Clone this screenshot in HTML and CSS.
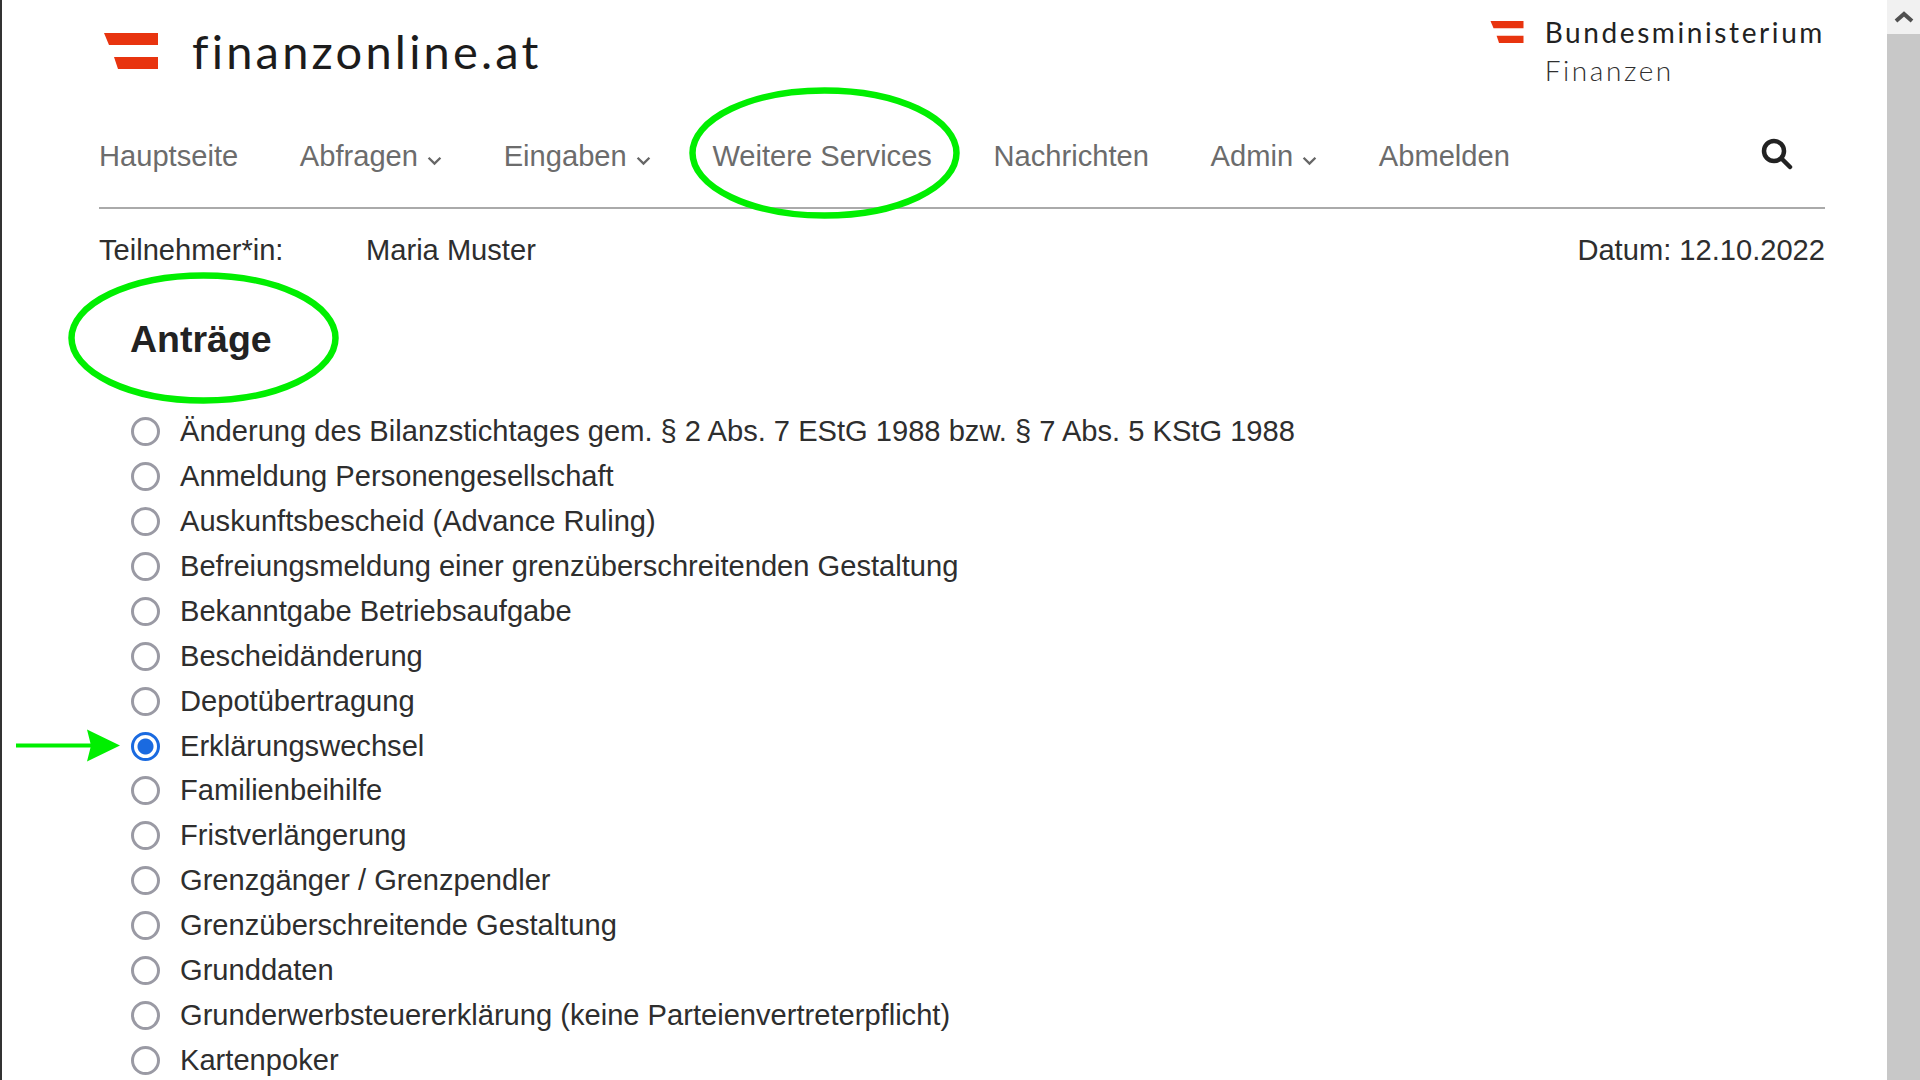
FILE: index.html
```html
<!DOCTYPE html>
<html lang="de">

<head>
  <meta charset="UTF-8" />
  <meta name="viewport" content="width=device-width, initial-scale=1" />
  <title>FinanzOnline - Anträge</title>
  <link rel="stylesheet" href="styles.css">
</head>

<body>
  <div class="page">
    <main class="content">
      <header class="top">
        <div class="logo">
          <svg class="flag" viewBox="0 0 54 36" aria-hidden="true">
            <polygon points="0,0 54,0 54,12 5,12" />
            <polygon points="10,24 54,24 54,36 14,36" />
          </svg>
          <span class="logo-text">finanzonline.at</span>
        </div>
        <div class="ministry">
          <svg class="flag-small" viewBox="0 0 54 36" aria-hidden="true">
            <polygon points="0,0 54,0 54,12 5,12" />
            <polygon points="10,24 54,24 54,36 14,36" />
          </svg>
          <div class="ministry-text">
            <div class="ministry-name">Bundesministerium</div>
            <div class="ministry-sub">Finanzen</div>
          </div>
        </div>
      </header>

      <nav class="nav">
        <a href="#">Hauptseite</a>
        <a href="#">Abfragen<svg class="chev" viewBox="0 0 14 9"><path d="M1.5 1.5 7 7l5.5-5.5" /></svg></a>
        <a href="#">Eingaben<svg class="chev" viewBox="0 0 14 9"><path d="M1.5 1.5 7 7l5.5-5.5" /></svg></a>
        <a href="#">Weitere Services</a>
        <a href="#">Nachrichten</a>
        <a href="#">Admin<svg class="chev" viewBox="0 0 14 9"><path d="M1.5 1.5 7 7l5.5-5.5" /></svg></a>
        <a href="#">Abmelden</a>
        <svg class="search" viewBox="0 0 32 32" aria-label="Suche">
          <circle cx="13" cy="13" r="10" />
          <path d="M20.5 20.5 29 29" />
        </svg>
      </nav>

      <div class="meta">
        <span class="meta-label">Teilnehmer*in:</span>
        <span class="meta-name">Maria Muster</span>
        <span class="meta-date">Datum: 12.10.2022</span>
      </div>

      <h1>Anträge</h1>

      <form class="list">
        <label><input type="radio" name="antrag" />Änderung des Bilanzstichtages gem. § 2 Abs. 7 EStG 1988 bzw. § 7 Abs. 5 KStG 1988</label>
        <label><input type="radio" name="antrag" />Anmeldung Personengesellschaft</label>
        <label><input type="radio" name="antrag" />Auskunftsbescheid (Advance Ruling)</label>
        <label><input type="radio" name="antrag" />Befreiungsmeldung einer grenzüberschreitenden Gestaltung</label>
        <label><input type="radio" name="antrag" />Bekanntgabe Betriebsaufgabe</label>
        <label><input type="radio" name="antrag" />Bescheidänderung</label>
        <label><input type="radio" name="antrag" />Depotübertragung</label>
        <label><input type="radio" name="antrag" checked />Erklärungswechsel</label>
        <label><input type="radio" name="antrag" />Familienbeihilfe</label>
        <label><input type="radio" name="antrag" />Fristverlängerung</label>
        <label><input type="radio" name="antrag" />Grenzgänger / Grenzpendler</label>
        <label><input type="radio" name="antrag" />Grenzüberschreitende Gestaltung</label>
        <label><input type="radio" name="antrag" />Grunddaten</label>
        <label><input type="radio" name="antrag" />Grunderwerbsteuererklärung (keine Parteienvertreterpflicht)</label>
        <label><input type="radio" name="antrag" />Kartenpoker</label>
      </form>
    </main>

    <div class="scrollbar">
      <div class="scroll-up">
        <svg viewBox="0 0 20 12"><path d="M2 10 10 3l8 7" /></svg>
      </div>
    </div>

    <!-- green markings lying over the page -->
    <svg class="marks" viewBox="0 0 1920 1080" aria-hidden="true">
      <ellipse cx="824.5" cy="153" rx="132" ry="62.5" />
      <ellipse cx="203.5" cy="338" rx="132" ry="62.5" />
      <path class="arrow-line" d="M16 745.5H92" />
      <polygon class="arrow-head" points="87,729.5 120,745.5 87,761.5 91,745.5" />
    </svg>
  </div>
</body>

</html>
```

FILE: styles.css
```css
* {
  margin: 0;
  padding: 0;
  box-sizing: border-box;
}

html,
body {
  height: 100%;
  overflow: hidden;
}

body {
  font-family: 'Liberation Sans', Arial, sans-serif;
  background: white;
  color: #2e2e2e;
}

.page {
  position: relative;
  display: flex;
  height: 100vh;
  border-left: 2px solid #333;
}

.content {
  flex: 1;
  padding: 0 62px 0 97px;
  font-size: 29.12px;
}

/* header with the two logos */
.top {
  display: flex;
  justify-content: space-between;
  height: 112px;
}

.logo {
  display: flex;
  align-items: flex-start;
  margin-left: 5px;
  padding-top: 33px;
}

.flag {
  width: 54px;
  height: 36px;
  fill: #e8340f;
}

.logo-text {
  margin: -7px 0 0 34px;
  font-family: 'Lato', sans-serif;
  font-size: 47px;
  line-height: 50px;
  letter-spacing: 3.2px;
  color: #1c1c1c;
}

.ministry {
  display: flex;
  align-items: flex-start;
  padding-top: 21px;
}

.flag-small {
  width: 34px;
  height: 22px;
  fill: #e8340f;
}

.ministry-text {
  margin: -8px 0 0 21px;
  font-family: 'Lato', sans-serif;
  font-size: 28px;
  line-height: 38px;
  letter-spacing: 2.6px;
}

.ministry-name {
  color: #222;
}

.ministry-sub {
  color: #2f2f2f;
  font-weight: 300;
}

/* navigation */
.nav {
  display: flex;
  align-items: center;
  gap: 61.7px;
  height: 88px;
  padding-bottom: 7px;
  border-bottom: 2px solid #aaa;
  box-sizing: content-box;
}

.nav a {
  color: #6c6c6c;
  text-decoration: none;
}

.chev {
  width: 15px;
  height: 10px;
  margin-left: 9px;
  fill: none;
  stroke: #666;
  stroke-width: 2.2;
}

.search {
  width: 32px;
  height: 32px;
  margin: 0 32px 4px auto;
  fill: none;
  stroke: #222;
  stroke-width: 4.5;
  stroke-linecap: round;
}

.meta {
  display: flex;
  height: 82px;
  align-items: center;
}

.meta-label {
  width: 267px;
}

.meta-date {
  margin-left: auto;
}

h1 {
  height: 94px;
  padding-left: 31px;
  font-size: 37.5px;
  line-height: 96px;
  color: #222;
}

.list {
  margin-top: 24px;
  padding-left: 32px;
}

.list label {
  display: flex;
  align-items: center;
  gap: 20px;
  height: 44.95px;
}

.list input {
  appearance: none;
  width: 29px;
  height: 29px;
  border: 3px solid #9a9aa4;
  border-radius: 50%;
  background: white;
}

.list input:checked {
  border-color: #1a6ae0;
  background: radial-gradient(circle, #1a6ae0 0 7.5px, white 8.5px);
}

/* browser scrollbar */
.scrollbar {
  width: 33px;
  background: #c8c8c8;
}

.scroll-up {
  display: flex;
  align-items: center;
  justify-content: center;
  height: 34px;
  background: #f1f1f1;
}

.scroll-up svg {
  width: 20px;
  height: 12px;
  fill: none;
  stroke: #505050;
  stroke-width: 4;
}

.marks {
  position: absolute;
  left: -2px;
  top: 0;
  width: 1920px;
  height: 1080px;
  pointer-events: none;
}

.marks ellipse {
  fill: none;
  stroke: #00ef00;
  stroke-width: 6.5;
}

.arrow-line {
  stroke: #00ef00;
  stroke-width: 4;
}

.arrow-head {
  fill: #00ef00;
}
```
